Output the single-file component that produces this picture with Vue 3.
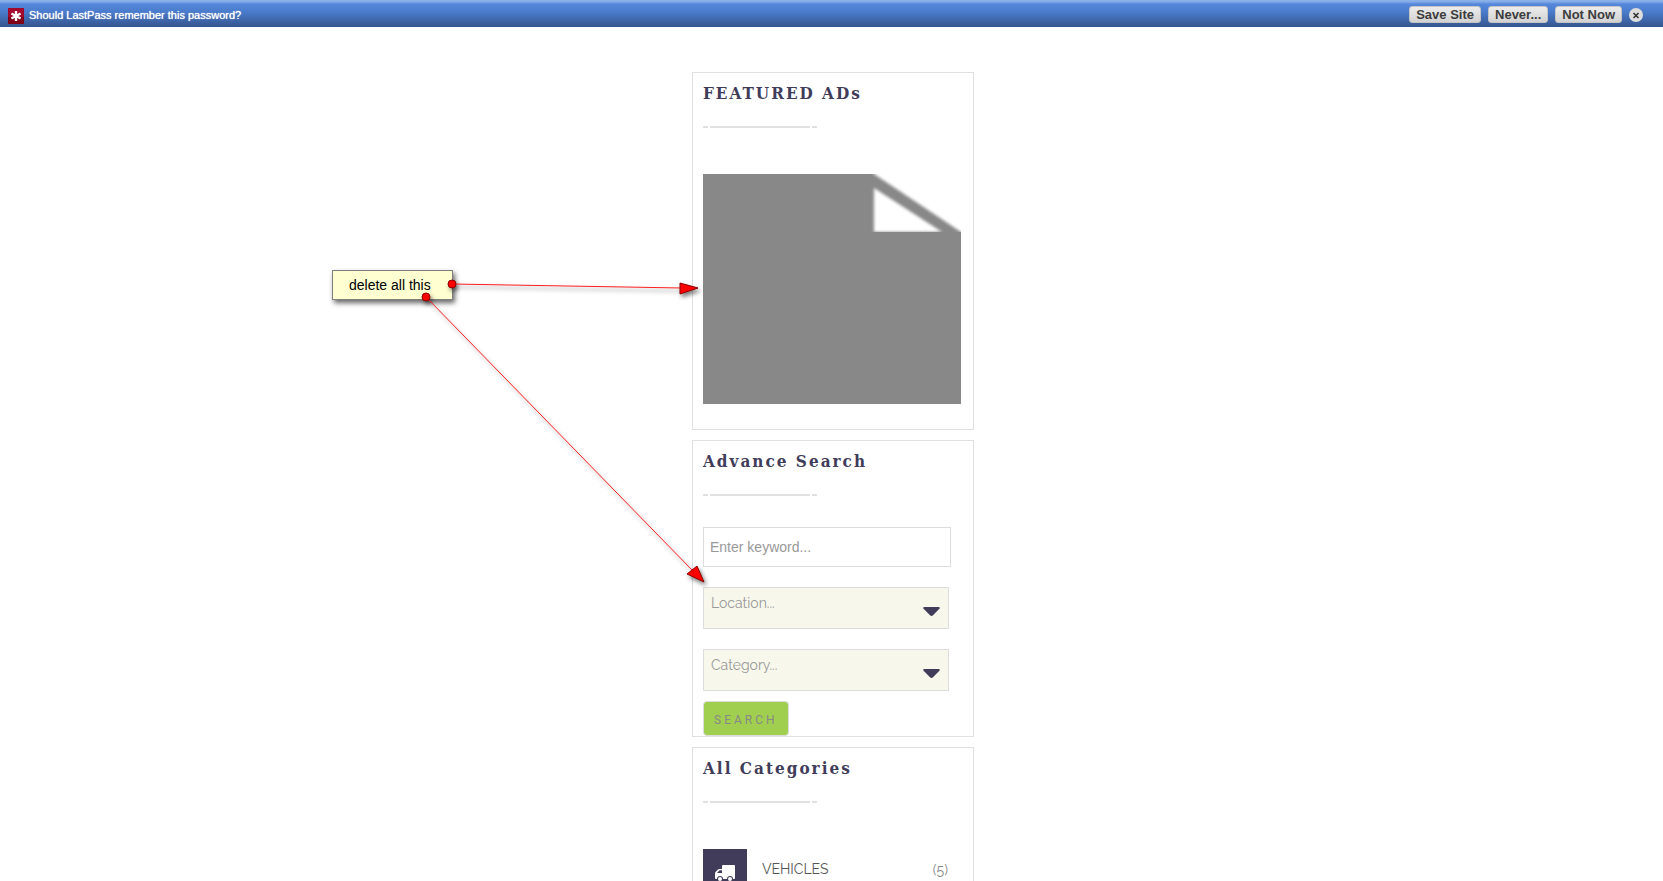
<script setup>
import { ref } from 'vue'

const keyword = ref('')
const location = ref('')
const category = ref('')

const categories = [{ name: 'VEHICLES', count: 5 }]
</script>

<template>
  <div class="page">
    <header class="lastpass-bar">
      <svg class="lastpass-logo" viewBox="0 0 16 16" aria-hidden="true">
        <rect width="16" height="16" fill="#800018" />
        <rect width="16" height="9" fill="#a3082c" />
        <path d="M8 3v10M3.400 5.500l9.200 5M12.600 5.500l-9.200 5" stroke="#fff" stroke-width="2.400" />
      </svg>
      <span class="lastpass-text">Should LastPass remember this password?</span>
      <div class="lastpass-actions">
        <button type="button" class="bar-button">Save Site</button>
        <button type="button" class="bar-button">Never...</button>
        <button type="button" class="bar-button">Not Now</button>
        <button type="button" class="bar-close" aria-label="Close">
          <svg viewBox="0 0 14 14">
            <path d="M4.5 5l5 5M9.5 5l-5 5" stroke="#333" stroke-width="1.6" />
          </svg>
        </button>
      </div>
    </header>

    <main class="content">
      <aside class="sidebar">
        <section class="card">
          <h3 class="card-title">FEATURED ADs</h3>
          <div class="divider"><i></i><i class="long"></i><i></i></div>
          <svg class="ad-image" viewBox="0 0 258 230" role="img" aria-label="Featured ad">
            <defs>
              <filter id="soft" x="-10%" y="-10%" width="120%" height="120%">
                <feGaussianBlur stdDeviation="1.5" />
              </filter>
            </defs>
            <rect width="258" height="230" fill="#888" />
            <g fill="#fff" filter="url(#soft)">
              <path d="M169-6H268V64L258 58 171 0z" />
              <path d="M171 14L239 58H171z" />
            </g>
            <rect y="58" width="258" height="172" fill="#888" />
          </svg>
        </section>

        <section class="card search-card">
          <h3 class="card-title">Advance Search</h3>
          <div class="divider"><i></i><i class="long"></i><i></i></div>
          <form class="search-form" @submit.prevent>
            <input v-model="keyword" class="keyword" type="text" placeholder="Enter keyword..." aria-label="Keyword" />
            <div class="select-wrap">
              <select v-model="location" aria-label="Location">
                <option value="">Location...</option>
              </select>
              <svg class="caret" viewBox="0 0 17 9"><path d="M1 0H16Q17.400 .6 16.400 1.800L10 8.300Q8.500 9.600 7 8.300L.6 1.800Q-.4 .6 1 0z" /></svg>
            </div>
            <div class="select-wrap">
              <select v-model="category" aria-label="Category">
                <option value="">Category...</option>
              </select>
              <svg class="caret" viewBox="0 0 17 9"><path d="M1 0H16Q17.400 .6 16.400 1.800L10 8.300Q8.500 9.600 7 8.300L.6 1.800Q-.4 .6 1 0z" /></svg>
            </div>
            <button type="submit" class="search-button">SEARCH</button>
          </form>
        </section>

        <section class="card">
          <h3 class="card-title">All Categories</h3>
          <div class="divider"><i></i><i class="long"></i><i></i></div>
          <ul class="category-list">
            <li v-for="item in categories" :key="item.name">
              <a href="#" class="category-link">
                <span class="category-icon">
                  <svg viewBox="0 0 20 17" aria-hidden="true">
                    <path fill-rule="evenodd" d="M8 0H19Q20 0 20 1V13Q20 14 19 14H18A3 3 0 0 0 12 14H8A3 3 0 0 0 2 14H1Q0 14 0 13V8.500Q0 7.500 .8 6.700L3 4.500Q3.600 4 4.500 4H7V1Q7 0 8 0zM4.600 5.300L2 8H7V5.300z" />
                    <circle cx="5" cy="14" r="2" />
                    <circle cx="15" cy="14" r="2" />
                  </svg>
                </span>
                <span class="category-name">{{ item.name }}</span>
                <span class="category-count">({{ item.count }})</span>
              </a>
            </li>
          </ul>
        </section>

        <div class="note">delete all this</div>
        <svg class="arrows" viewBox="0 0 380 320" aria-hidden="true">
          <g stroke="#ff2020" fill="none">
            <path d="M120 14L350 18" />
            <path d="M94 27L360 300" />
          </g>
          <g stroke="#8c0000" fill="#f00">
            <path d="M348 13L366 18 348 24z" />
            <path d="M365 296L372 312 355 304z" />
            <circle cx="120" cy="14" r="4" />
            <circle cx="94" cy="27" r="4" />
          </g>
        </svg>
      </aside>
    </main>
  </div>
</template>

<style>
body {
  margin: 0;
  background: #fff;
}
</style>

<style scoped>
.page {
  display: flex;
  flex-direction: column;
  height: 100vh;
  overflow: hidden;
  font-family: Raleway, Lato, sans-serif;
}

* {
  box-sizing: border-box;
}

.lastpass-bar {
  display: flex;
  flex: none;
  align-items: center;
  height: 27px;
  padding: 2px 20px 0 8px;
  background: linear-gradient(#8fb4ea 0, #7fa8e6 2px, #5588dc 4px, #4a7bcb 12px, #35558f 27px);
  font-family: "Liberation Sans", Arial, sans-serif;
}

.lastpass-logo {
  width: 16px;
  height: 16px;
  margin: 3px 5px 0 0;
}

.lastpass-text {
  color: #fff;
  font-size: 11px;
  line-height: 16px;
  text-shadow: 0 0 1px #fff;
}

.lastpass-actions {
  display: flex;
  align-items: center;
  gap: 7px;
  margin-left: auto;
}

.bar-button {
  height: 17px;
  padding: 0 6px;
  border: 1px solid #c4c4c4;
  border-radius: 3px;
  background: linear-gradient(#ececec, #d2d2d2);
  color: #3c3c3c;
  font-family: "Liberation Sans", Arial, sans-serif;
  font-size: 13px;
  font-weight: 700;
  line-height: 15px;
}

.bar-close {
  display: flex;
  width: 14px;
  height: 14px;
  padding: 0;
  border: 0;
  border-radius: 50%;
  background: #ddd;
}

.content {
  display: flex;
  flex: 1;
  justify-content: center;
  min-height: 0;
  padding: 45px 0 0 3px;
}

.sidebar {
  position: relative;
  display: flex;
  flex-direction: column;
  gap: 10px;
  width: 282px;
}

.card {
  flex: none;
  padding: 10px 10px 25px;
  border: 1px solid #e0e0e0;
}

.search-card {
  padding-bottom: 0;
}

.card-title {
  margin: 0;
  color: #403c59;
  font-family: "Roboto Slab", "DejaVu Serif Condensed", "DejaVu Serif", serif;
  font-size: 17px;
  font-weight: 700;
  letter-spacing: 2px;
  line-height: 20px;
}

.divider {
  display: flex;
  gap: 2px;
  margin: 23px 0 46px;
}

.divider i {
  width: 5px;
  height: 2px;
  background: #e0e0e0;
}

.divider .long {
  width: 100px;
}

.ad-image {
  display: block;
  width: 258px;
  height: 230px;
}

.search-card .divider {
  margin-bottom: 31px;
}

.search-form {
  display: flex;
  flex-direction: column;
  align-items: flex-start;
}

.keyword {
  width: 248px;
  height: 40px;
  margin-bottom: 20px;
  padding: 0 6px;
  border: 1px solid #ddd;
  background: #fff;
  font-family: "Liberation Sans", Arial, sans-serif;
  font-size: 14px;
}

.keyword::placeholder {
  color: #999;
}

.select-wrap {
  position: relative;
  width: 246px;
  height: 42px;
  margin-bottom: 20px;
}

.select-wrap + .search-button {
  margin-top: -10px;
}

.select-wrap select {
  width: 100%;
  height: 100%;
  padding: 0 30px 10px 7px;
  border: 1px solid #ddd;
  border-radius: 0;
  appearance: none;
  background: #f7f7eb;
  color: #999;
  font-family: Raleway, Lato, sans-serif;
  font-size: 14px;
}

.caret {
  position: absolute;
  top: 20px;
  right: 9px;
  width: 17px;
  height: 9px;
  fill: #403c59;
  pointer-events: none;
}

.search-button {
  height: 35px;
  padding: 2px 10px 0;
  border: 1px solid #ddd;
  border-radius: 4px;
  background: #a0cf4f;
  color: #888;
  font-family: Roboto, sans-serif;
  font-size: 12px;
  letter-spacing: 3px;
}

.category-list {
  margin: 0;
  padding: 0;
  list-style: none;
}

.category-link {
  display: flex;
  align-items: center;
  padding-right: 15px;
  color: #555;
  font-family: Raleway, Lato, sans-serif;
  font-size: 14px;
  line-height: 20px;
  text-decoration: none;
}

.category-icon {
  display: flex;
  align-items: center;
  justify-content: center;
  width: 44px;
  height: 44px;
  margin-right: 15px;
  background: #403c59;
}

.category-icon svg {
  width: 20px;
  height: 17px;
  margin-top: 4px;
  fill: #fff;
}

.category-name {
  padding-bottom: 4px;
}

.category-count {
  margin-left: auto;
  padding-bottom: 2px;
  color: #888;
}

.note {
  position: absolute;
  top: 198px;
  left: -360px;
  width: 121px;
  height: 30px;
  border: 1px solid #808080;
  background: #ffffd2;
  box-shadow: 2px 3px 5px rgba(0, 0, 0, 0.6);
  color: #000;
  font-family: "Liberation Sans", Arial, sans-serif;
  font-size: 14px;
  line-height: 28px;
  padding-left: 16px;
}

.arrows {
  position: absolute;
  top: 198px;
  left: -360px;
  width: 380px;
  height: 320px;
  filter: drop-shadow(2px 3px 2px rgba(0, 0, 0, 0.5));
  pointer-events: none;
}
</style>
